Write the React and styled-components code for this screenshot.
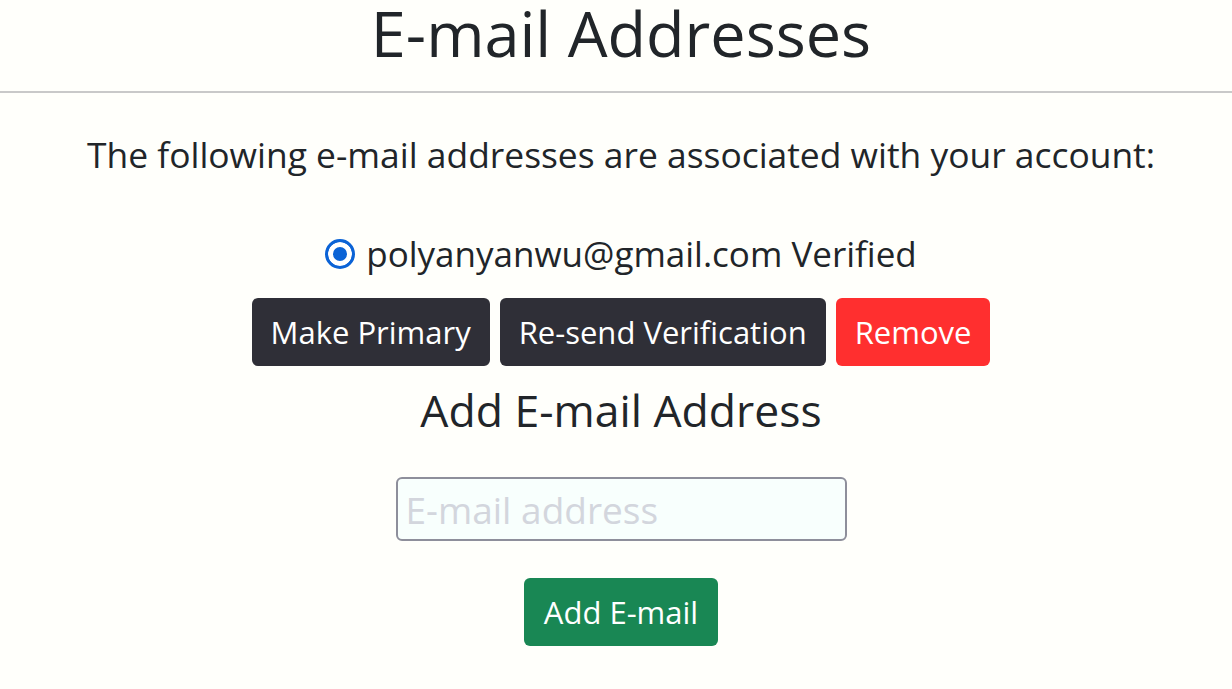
import React from "react";
import styled, { createGlobalStyle } from "styled-components";

const GlobalStyle = createGlobalStyle`
  html, body {
    margin: 0;
    padding: 0;
    background: #fffffb;
  }
  body {
    font-family: "Open Sans", "Noto Sans", sans-serif;
    color: #212529;
  }
`;

const Section = styled.div`
  display: flex;
  flex-direction: column;
  align-items: center;
  text-align: center;
  padding-left: 10px;
`;

const Title = styled.h1`
  margin: 0;
  font-size: 63px;
  font-weight: 400;
  line-height: 66px;
  color: #212529;
`;

const Rule = styled.hr`
  margin: 25px 0 0;
  border: 0;
  border-top: 2px solid #c9c9c9;
`;

const Lead = styled.p`
  margin: 37px 0 0;
  font-size: 35.4px;
  line-height: 48px;
`;

const EmailRow = styled.label`
  display: flex;
  align-items: center;
  gap: 11px;
  margin-top: 53px;
  font-size: 35px;
  line-height: 46px;
`;

const Radio = styled.span`
  width: 30px;
  height: 30px;
  box-sizing: border-box;
  border-radius: 50%;
  border: 3px solid #0b63d6;
  background: #0b63d6;
  box-shadow: inset 0 0 0 5px #fff;
  flex: none;
`;

const ButtonRow = styled.div`
  display: flex;
  gap: 10px;
  margin-top: 21px;
`;

const Button = styled.button`
  height: 68px;
  padding: 0 ${(p) => p.$pad || 19}px;
  border: 0;
  border-radius: 6px;
  font-family: inherit;
  font-size: 31px;
  color: #fff;
  background: ${(p) => p.$bg};
  cursor: pointer;
`;

const SubTitle = styled.h2`
  margin: 18px 0 0;
  font-size: 44.5px;
  font-weight: 400;
  line-height: 52px;
`;

const Input = styled.input`
  margin-top: 41px;
  width: 451px;
  height: 64px;
  box-sizing: border-box;
  padding: 0 12px 0 8px;
  border: 2px solid #8e8f9b;
  border-radius: 6px;
  background: #f8fffd;
  font-family: inherit;
  font-size: 37px;
  color: #212529;
  outline: none;

  &::placeholder {
    color: #d3d6dd;
  }
`;

const SubmitRow = styled.div`
  margin-top: 37px;
`;

export default function App() {
  return (
    <>
      <GlobalStyle />
      <Section>
        <Title>E-mail Addresses</Title>
      </Section>
      <Rule />
      <Section>
        <Lead>The following e-mail addresses are associated with your account:</Lead>
        <EmailRow>
          <Radio />
          <span>polyanyanwu@gmail.com Verified</span>
        </EmailRow>
        <ButtonRow>
          <Button $bg="#2f2f37">Make Primary</Button>
          <Button $bg="#2f2f37">Re-send Verification</Button>
          <Button $bg="#ff2f2f">Remove</Button>
        </ButtonRow>
        <SubTitle>Add E-mail Address</SubTitle>
        <Input type="email" placeholder="E-mail address" />
        <SubmitRow>
          <Button $bg="#198754" $pad={20}>Add E-mail</Button>
        </SubmitRow>
      </Section>
    </>
  );
}
